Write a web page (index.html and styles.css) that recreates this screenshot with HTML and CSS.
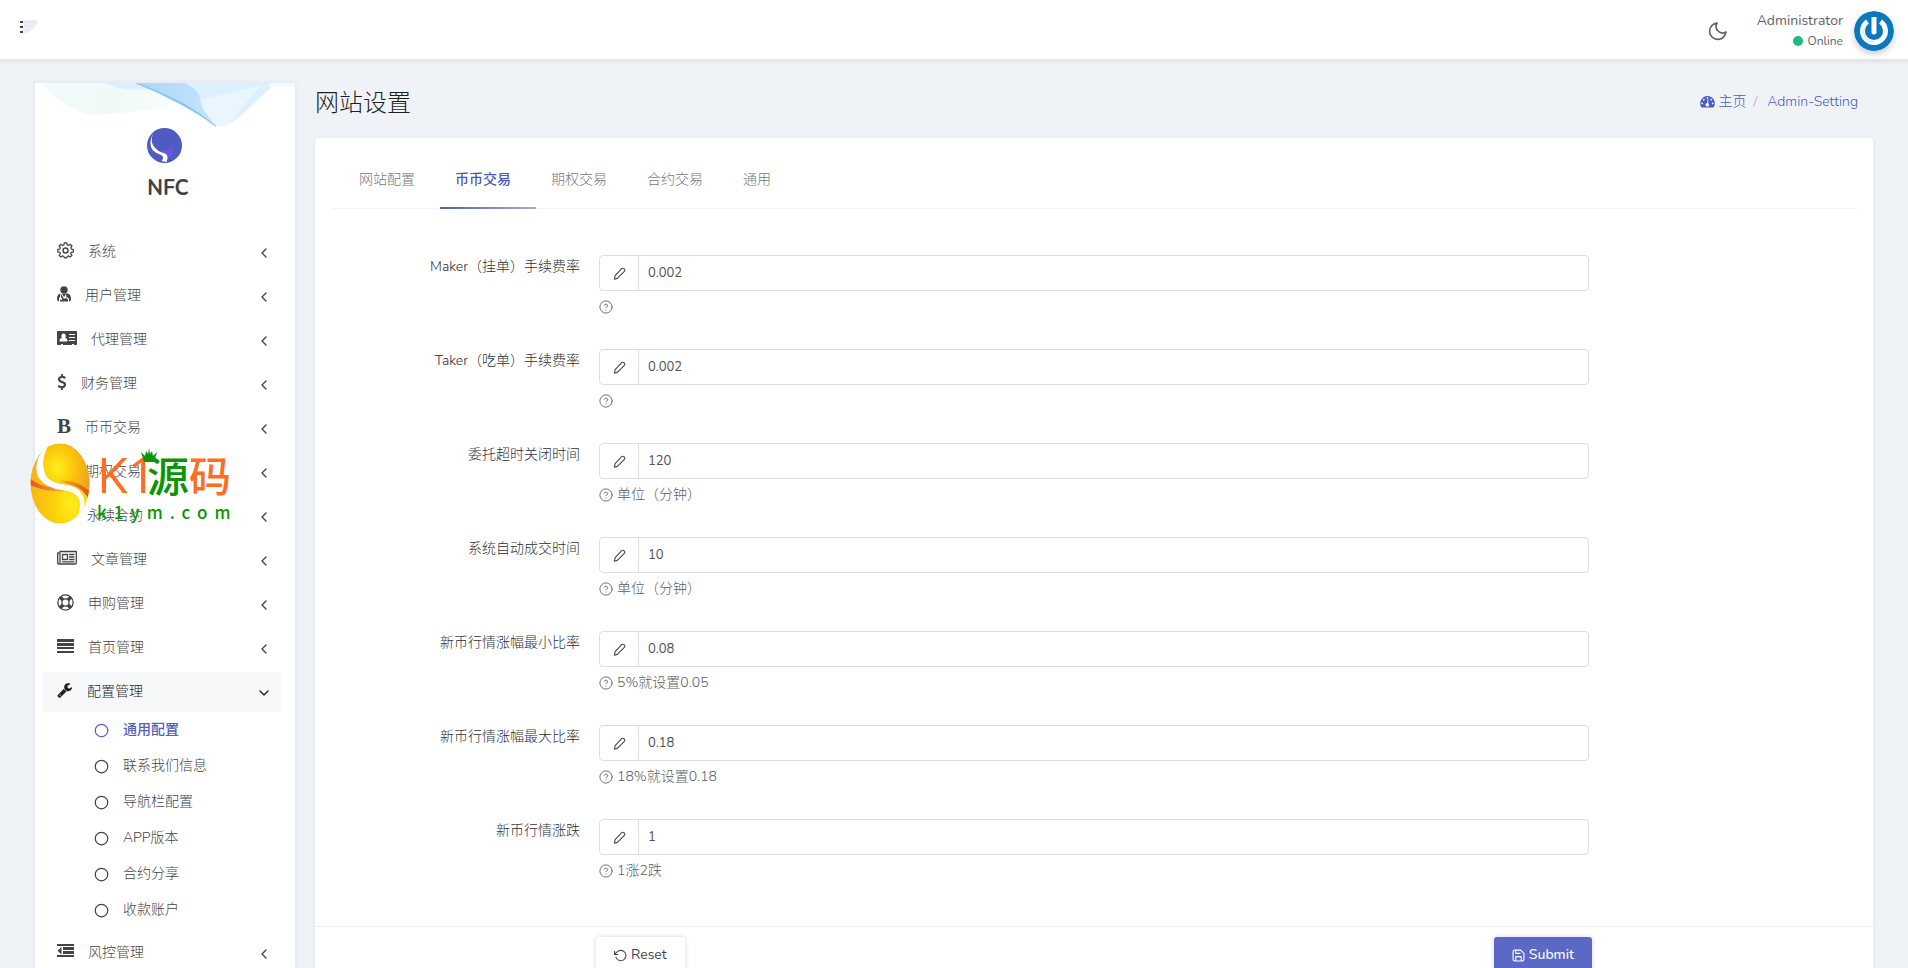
FILE: index.html
```html
<!DOCTYPE html>
<html lang="zh-CN">
<head>
<meta charset="utf-8">
<meta name="viewport" content="width=device-width, initial-scale=1">
<title>网站设置</title>
<link rel="stylesheet" href="styles.css">
</head>
<body>
<svg class="sprite" aria-hidden="true">
  <symbol id="chev" viewBox="0 0 24 24"><path d="M15 18l-6-6 6-6"/></symbol>
  <symbol id="chev-down" viewBox="0 0 24 24"><path d="M6 9l6 6 6-6"/></symbol>
  <symbol id="ring" viewBox="0 0 24 24"><circle cx="12" cy="12" r="10"/></symbol>
  <symbol id="pencil" viewBox="0 0 24 24"><path d="M16 3a2.800 2.800 0 0 1 4 0l1 1a2.800 2.800 0 0 1 0 4L8 21l-5.500 1.500L4 16z"/></symbol>
  <symbol id="help" viewBox="0 0 24 24"><circle cx="12" cy="12" r="10.500"/><path d="M9.100 9a3 3 0 0 1 5.800 1c0 2-3 3-3 3M12 17v.1"/></symbol>
</svg>

<header class="topbar">
  <button class="icon-btn" type="button" aria-label="菜单">
    <svg width="18" height="14" viewBox="0 0 18 14"><path d="M3 0h15q-2 9-11 13H3z" fill="#eceff4"/><path d="M4 2h12M4 6h9M4 10h6" stroke="#e0e4ea"/><path d="M0 1h3v2H0zM0 6h3v2H0zM0 11h3v2H0z" fill="#444"/></svg>
  </button>
  <div class="topbar-right">
    <button class="icon-btn" type="button" aria-label="夜间模式">
      <svg class="line moon" viewBox="0 0 24 24"><path d="M21.500 13A9.800 9.800 0 1 1 11 2.500 7.600 7.600 0 0 0 21.500 13z"/></svg>
    </button>
    <div class="user">
      <span class="user-name">Administrator</span>
      <span class="user-status"><i class="dot"></i>Online</span>
    </div>
    <svg class="avatar" viewBox="0 0 40 40" role="img" aria-label="avatar"><circle cx="20" cy="20" r="20" fill="#0a78bd"/><path d="M13.500 10.500A11.500 11.500 0 1 0 26.500 10.500" fill="none" stroke="#fff" stroke-width="5"/><path d="M14 12q-4 3-4.500 9 1 9 10.500 10" fill="none" stroke="#cfdfea" stroke-width="1"/><path d="M17.500 6h5v15a2.500 2.500 0 0 1-5 0z" fill="#fff"/></svg>
  </div>
</header>

<div class="shell">
  <aside class="sidebar">
    <div class="brand">
      <svg class="waves" viewBox="0 0 260 48" preserveAspectRatio="none" aria-hidden="true">
        <defs>
          <linearGradient id="w1"><stop offset="0" stop-color="#a9d6fa"/><stop offset=".6" stop-color="#c9e4fc"/><stop offset="1" stop-color="#e3f6fc"/></linearGradient>
          <linearGradient id="w2"><stop offset="0" stop-color="#f1faf9"/><stop offset=".5" stop-color="#effaf8"/><stop offset="1" stop-color="#fafeff"/></linearGradient>
        </defs>
        <path d="M6 0h105l40 20q-50 14-100 12Q30 26 6 0z" fill="url(#w2)"/>
        <path d="M70 0h55l-8 5q-25 6-47-5z" fill="#ddeffc"/>
        <path d="M101 0h141q-15 12-34 32-18 16-27 12Q150 20 101 0z" fill="url(#w1)"/>
        <path d="M150 0h92q-15 12-34 32-18 16-27 12-14-14-16-26 0-10-15-18z" fill="#dcf1fd"/>
        <path d="M166 17q30-6 60-15l-34 42q-9 4-13-2-12-14-13-25z" fill="#e9f6fe"/>
        <path d="M101 0q50 18 80 45Q150 21 101 0z" fill="#69bbf4" stroke="#8dcbf7" stroke-width="1"/>
        <path d="M235 0h25v5q-12-4-25 0z" fill="#f2fbff"/>
      </svg>
      <svg class="logo" viewBox="0 0 36 36" aria-hidden="true"><circle cx="18" cy="18" r="18" fill="#4e5bc0"/><path d="M15 23q10 0 9-5 6 5 1 12l-6 1z" fill="#6757dc"/><path d="M6 6Q1 17 6 23q4 4 9 5 3 2 0 6l5 1q3-7-2-9-7-2-10-6Q3 15 6 6z" fill="#fff"/></svg>
      <span class="brand-name">NFC</span>
    </div>
    <nav>
      <ul class="menu">
        <li><a class="item" href="#"><svg class="line w17" viewBox="0 0 24 24"><circle cx="12" cy="12" r="3.500"/><path d="M10 1.500h4l.6 3.300 2 .9 2.900-2 2.800 2.800-2 2.900.9 2 3.300.6v4l-3.300.6-.9 2 2 2.900-2.800 2.500-2.900-1.700-2 .9-.6 2.300h-4l-.6-2.300-2-.9-2.900 1.700-2.800-2.500 2-2.900-.9-2-3.300-.6v-4l3.300-.6.9-2-2-2.900 2.800-2.800 2.900 2 2-.9z" transform="translate(1.500 0) scale(.88)"/></svg>系统<svg class="line chev"><use href="#chev"/></svg></a></li>
        <li><a class="item" href="#"><svg class="solid w14" viewBox="0 0 14 16"><circle cx="7" cy="4" r="3.700"/><path d="M3.500 7.500Q0 8 0 13q0 2 2 2.500V13a1.500 1.500 0 0 1 1-1.800zM5 8l2 3 2-3 .5 3.500h1Q12 12 12 13.500v2q2-.5 2-2.500 0-5-3.500-5.500zM4 8v3.500q1.500.5 1 2.200H3v1.800h8v-2q-2-.5-1.700-1.800L7 13z"/></svg>用户管理<svg class="line chev"><use href="#chev"/></svg></a></li>
        <li><a class="item" href="#"><svg class="solid w20" viewBox="0 0 20 16"><path fill-rule="evenodd" d="M1 1h18q1 0 1 1v12q0 1-1 1h-2v-1h-2v1H6v-1H4v1H1q-1 0-1-1V2q0-1 1-1zm5.500 2.500a2.200 2.600 0 1 0 .1 0zM4.500 8Q2.500 8 2.500 11.500h8Q10.500 8 8.500 8q-2 1.500-4 0zM12 4v1h6V4zm0 3v1h6V7zm0 3v1h6v-1z"/></svg>代理管理<svg class="line chev"><use href="#chev"/></svg></a></li>
        <li><a class="item" href="#"><svg class="solid w10" viewBox="356 0 1100 1792"><path d="M1362 1185q0 153-99.500 263.500t-258.500 136.500v175q0 14-9 23t-23 9h-135q-13 0-22.500-9.500t-9.500-22.500v-175q-66-9-127.500-31t-101.500-44.500-74-48-46.500-37.500-17.500-18q-17-21-2-41l103-135q7-10 23-12 15-2 24 9l2 2q113 99 243 125 37 8 74 8 81 0 142.500-43t61.500-122q0-28-15-53t-33.500-42-58.500-37.500-66-32-80-32.500q-39-16-61.500-25t-61.500-26.500-62.500-31-56.500-35.500-53.500-42.500-43.500-49-35.500-58-21-66.500-8.500-78q0-138 98-242t255-134v-180q0-13 9.500-22.500t22.500-9.500h135q14 0 23 9t9 23v176q57 6 110.500 23t87 33.500 63.500 37.500 39 29 15 14q17 18 5 38l-81 146q-8 15-23 16-14 3-27-7-3-3-14.500-12t-39-26.500-58.500-32-74.500-26-85.500-11.500q-95 0-155 43t-60 111q0 26 8.500 48t29.500 41.500 39.500 33 56 31 60.500 27 70 27.500q53 20 81 31.500t76 35 75.500 42.500 62 50 53 63.500 31.500 76.500 13 94z"/></svg>财务管理<svg class="line chev"><use href="#chev"/></svg></a></li>
        <li><a class="item" href="#"><b class="bold-icon" aria-hidden="true">B</b>币币交易<svg class="line chev"><use href="#chev"/></svg></a></li>
        <li><a class="item" href="#"><svg class="line w14" viewBox="0 0 24 24"><use href="#ring"/></svg>期权交易<svg class="line chev"><use href="#chev"/></svg></a></li>
        <li><a class="item" href="#"><svg class="line w16" viewBox="0 0 24 24"><use href="#ring"/></svg>永续合约<svg class="line chev"><use href="#chev"/></svg></a></li>
        <li><a class="item" href="#"><svg class="line w20" viewBox="0 0 20 16"><path stroke-width="1.300" d="M3 1.500h16.300v11.300q0 1.200-1.300 1.200H2Q.7 14 .7 12.800V3H3v9.500Q3 14 2 14M5.500 4.500h5v5h-5zM12.500 4.500H17M12.500 7H17M12.500 9.500H17M5.500 11.800H17"/></svg>文章管理<svg class="line chev"><use href="#chev"/></svg></a></li>
        <li><a class="item" href="#"><svg class="line w17" viewBox="0 0 24 24"><circle cx="12" cy="12" r="10.800" stroke-width="1.800"/><circle cx="12" cy="12" r="5" stroke-width="1.800"/><path stroke-width="5" stroke-linecap="butt" d="M4.500 4.500l4 4M19.500 4.500l-4 4M4.500 19.500l4-4M19.500 19.500l-4-4"/></svg>申购管理<svg class="line chev"><use href="#chev"/></svg></a></li>
        <li><a class="item" href="#"><svg class="solid w17" viewBox="0 0 17 17"><path d="M0 1h17v3H0zM0 5h17v3H0zM0 9h17v2H0zM0 13h17v2H0z"/></svg>首页管理<svg class="line chev"><use href="#chev"/></svg></a></li>
        <li>
          <a class="item open" href="#"><svg class="solid w16" viewBox="64 0 1728 1792"><path d="M448 1472q0-26-19-45t-45-19-45 19-19 45 19 45 45 19 45-19 19-45zm644-420l-682 682q-37 37-90 37-52 0-91-37l-106-108q-38-36-38-90 0-53 38-91l681-681q39 98 114.500 173.500t173.500 114.500zm634-435q0 39-23 106-47 134-164.500 217.500t-258.500 83.500q-185 0-316.500-131.500t-131.500-316.500 131.500-316.500 316.500-131.500q58 0 121.500 16.500t107.500 46.500q16 11 16 28t-16 28l-293 169v224l193 107q5-3 79-48.500t135.500-81 70.500-35.500q15 0 23.500 10t8.500 25z"/></svg>配置管理<svg class="line chev"><use href="#chev-down"/></svg></a>
          <ul class="submenu">
            <li><a class="sub current" href="#"><svg class="line"><use href="#ring"/></svg>通用配置</a></li>
            <li><a class="sub" href="#"><svg class="line"><use href="#ring"/></svg>联系我们信息</a></li>
            <li><a class="sub" href="#"><svg class="line"><use href="#ring"/></svg>导航栏配置</a></li>
            <li><a class="sub" href="#"><svg class="line"><use href="#ring"/></svg>APP版本</a></li>
            <li><a class="sub" href="#"><svg class="line"><use href="#ring"/></svg>合约分享</a></li>
            <li><a class="sub" href="#"><svg class="line"><use href="#ring"/></svg>收款账户</a></li>
          </ul>
        </li>
        <li><a class="item" href="#"><svg class="solid w17" viewBox="0 0 17 17"><path d="M0 1h17v2H0zM6 4h11v3H6zM6 8h11v3H6zM0 12h17v2H0zM4.500 4v7.500L.5 7.700z"/></svg>风控管理<svg class="line chev"><use href="#chev"/></svg></a></li>
      </ul>
    </nav>
  </aside>

  <main class="main">
    <div class="page-head">
      <h1>网站设置</h1>
      <nav class="crumbs">
        <a href="#"><svg class="solid" viewBox="0 0 16 14"><path fill-rule="evenodd" d="M8 1a8 8 0 0 0-6.800 12q.2.500.8.500h12q.6 0 .8-.5A8 8 0 0 0 8 1zM8 2.300a1 1 0 1 1-.1 0zM4 4a1 1 0 1 1-.1 0zM12 4a1 1 0 1 1-.1 0zM2.300 8a1 1 0 1 1-.1 0zM13.700 8a1 1 0 1 1-.1 0zM9.200 5l-.7 3.600a2 2 0 1 1-1-.1L8.300 4.800z"/></svg>主页</a>
        <span class="slash">/</span>
        <a href="#">Admin-Setting</a>
      </nav>
    </div>

    <form class="card">
      <div class="tabs" role="tablist">
        <button class="tab" type="button" role="tab">网站配置</button>
        <button class="tab active" type="button" role="tab" aria-selected="true">币币交易</button>
        <button class="tab" type="button" role="tab">期权交易</button>
        <button class="tab" type="button" role="tab">合约交易</button>
        <button class="tab" type="button" role="tab">通用</button>
      </div>

      <div class="fields">
        <div class="row"><label for="f1">Maker（挂单）手续费率</label><div class="field"><div class="group"><span class="addon"><svg class="line"><use href="#pencil"/></svg></span><input id="f1" type="text" value="0.002"></div><p class="hint"><svg class="line"><use href="#help"/></svg></p></div></div>
        <div class="row"><label for="f2">Taker（吃单）手续费率</label><div class="field"><div class="group"><span class="addon"><svg class="line"><use href="#pencil"/></svg></span><input id="f2" type="text" value="0.002"></div><p class="hint"><svg class="line"><use href="#help"/></svg></p></div></div>
        <div class="row"><label for="f3">委托超时关闭时间</label><div class="field"><div class="group"><span class="addon"><svg class="line"><use href="#pencil"/></svg></span><input id="f3" type="text" value="120"></div><p class="hint"><svg class="line"><use href="#help"/></svg>单位（分钟）</p></div></div>
        <div class="row"><label for="f4">系统自动成交时间</label><div class="field"><div class="group"><span class="addon"><svg class="line"><use href="#pencil"/></svg></span><input id="f4" type="text" value="10"></div><p class="hint"><svg class="line"><use href="#help"/></svg>单位（分钟）</p></div></div>
        <div class="row"><label for="f5">新币行情涨幅最小比率</label><div class="field"><div class="group"><span class="addon"><svg class="line"><use href="#pencil"/></svg></span><input id="f5" type="text" value="0.08"></div><p class="hint"><svg class="line"><use href="#help"/></svg>5%就设置0.05</p></div></div>
        <div class="row"><label for="f6">新币行情涨幅最大比率</label><div class="field"><div class="group"><span class="addon"><svg class="line"><use href="#pencil"/></svg></span><input id="f6" type="text" value="0.18"></div><p class="hint"><svg class="line"><use href="#help"/></svg>18%就设置0.18</p></div></div>
        <div class="row"><label for="f7">新币行情涨跌</label><div class="field"><div class="group"><span class="addon"><svg class="line"><use href="#pencil"/></svg></span><input id="f7" type="text" value="1"></div><p class="hint"><svg class="line"><use href="#help"/></svg>1涨2跌</p></div></div>
      </div>

      <div class="card-foot">
        <div class="actions">
          <button class="btn" type="reset"><svg class="line" viewBox="0 0 24 24"><path d="M1 4v6h6M3.500 15a9.500 9.500 0 1 0 2.200-9.500L1 10"/></svg>Reset</button>
          <button class="btn primary" type="submit"><svg class="line" viewBox="0 0 24 24"><path d="M19 22H5a3 3 0 0 1-3-3V5a3 3 0 0 1 3-3h11l6 6v11a3 3 0 0 1-3 3zM17 22v-8H7v8M7 2v6h8"/></svg>Submit</button>
        </div>
      </div>
    </form>
  </main>
</div>

<div class="watermark">
  <svg class="wm-logo" viewBox="0 0 60 80" aria-hidden="true">
    <defs>
      <radialGradient id="g1" cx=".32" cy=".42" r=".75"><stop offset="0" stop-color="#fff01a"/><stop offset=".45" stop-color="#fbc80a"/><stop offset="1" stop-color="#ee9a20"/></radialGradient>
      <radialGradient id="g2" cx=".68" cy=".76" r=".8"><stop offset="0" stop-color="#fff01a"/><stop offset=".4" stop-color="#fbcf0a"/><stop offset="1" stop-color="#f5ae1c"/></radialGradient>
      <linearGradient id="g3"><stop offset="0" stop-color="#e4532a"/><stop offset="1" stop-color="#f8b030"/></linearGradient>
      <linearGradient id="g4"><stop offset="0" stop-color="#f8b020"/><stop offset="1" stop-color="#de4826"/></linearGradient>
      <clipPath id="egg"><ellipse cx="30" cy="40" rx="29.500" ry="40"/></clipPath>
    </defs>
    <g clip-path="url(#egg)">
      <path d="M0 0h60v80H0z" fill="url(#g2)"/>
      <path d="M17 0h43v58q-4-14-23-17-17-1-24-9Q9 16 17 0z" fill="url(#g1)"/>
      <path d="M0 35q12 10 30 9l4 4Q14 48 1 42z" fill="url(#g3)"/>
      <path d="M30 37q20 0 30 12v10Q54 43 36 40z" fill="url(#g4)"/>
      <path d="M17 2Q2 18 8 33q7 12 27 14 15 2 15 14 0 10-5 16 11-10 9-22-4-12-19-14Q18 39 15 30 10 16 19 1z" fill="#fff"/>
    </g>
  </svg>
  <div class="wm-text">
    <div class="wm-name"><span class="wm-latin">K1</span><span class="wm-green">源<svg class="crown" viewBox="0 0 16 14" aria-hidden="true"><path d="M0 4l4 4 1-5 2 3 1-6 1 6 2-3 1 5 4-4-3 10H3z"/></svg></span><span>码</span></div>
    <div class="wm-url">k1ym.com</div>
  </div>
</div>
</body>
</html>
```

FILE: styles.css
```css
* { box-sizing: border-box; }

body {
  margin: 0;
  height: 100vh;
  display: flex;
  flex-direction: column;
  overflow: hidden;
  background: #eff3f8;
  color: #414750;
  font: 300 14px/20px Nunito, Lato, "Noto Sans CJK SC", sans-serif;
}

a { color: inherit; text-decoration: none; }
ul { list-style: none; margin: 0; padding: 0; }
button, input { font: inherit; color: inherit; }
.sprite { display: none; }
.line { fill: none; stroke: currentColor; stroke-width: 2; stroke-linecap: round; stroke-linejoin: round; }
.solid { fill: currentColor; stroke: none; }
.icon-btn { padding: 0; border: 0; background: none; cursor: pointer; }

/* top bar */
.topbar {
  flex: none;
  display: flex;
  justify-content: space-between;
  align-items: center;
  height: 60px;
  padding: 2px 14px 0 20px;
  background: #fff;
  border-bottom: 1px solid #e3e7ec;
  box-shadow: 0 2px 4px rgba(0, 0, 0, .07);
  z-index: 1;
}
.topbar > .icon-btn { display: flex; padding-bottom: 7px; }
.topbar-right { display: flex; align-items: center; color: #626262; }
.moon { display: block; width: 20px; height: 20px; margin-right: 29px; }
.user { display: flex; flex-direction: column; align-items: flex-end; margin-right: 11px; font-weight: 400; }
.user-status { display: flex; align-items: center; gap: 4px; font-size: 12px; }
.dot { width: 10px; height: 10px; border-radius: 50%; background: #21b978; }
.avatar { width: 40px; height: 40px; border-radius: 50%; box-shadow: 0 3px 6px rgba(0, 0, 0, .2); }

.shell { flex: 1; min-height: 0; display: flex; padding: 0 35px; gap: 20px; }

/* sidebar */
.sidebar {
  flex: 0 0 260px;
  margin-top: 23px;
  background: #fff;
  box-shadow: 0 0 6px rgba(30, 50, 90, .08);
  overflow: hidden;
  color: #444;
}
.brand {
  display: grid;
  grid-template-rows: 45px 35px 15px 20px;
  justify-items: center;
  height: 149px;
}
.waves { width: 100%; height: 46px; }
.logo { width: 35px; height: 35px; margin-right: 2px; }
.brand-name { grid-row: 4; font-size: 21px; font-weight: 700; margin-left: 6px; color: #3c424b; }
.menu { padding: 0 14px 0 8px; }
.item {
  display: flex;
  align-items: center;
  gap: 14px;
  height: 40px;
  margin-bottom: 4px;
  padding: 0 9px 0 14px;
  border-radius: 3px;
}
.item > :first-child { flex: none; height: 16px; margin-bottom: 4px; }
.item > .w17 { width: 17px; height: 17px; }
.w10 { width: 10px; }
.w14 { width: 14px; }
.w16 { width: 16px; }
.w20 { width: 20px; }
.bold-icon { width: 14px; font: 700 21px/16px "Liberation Serif", serif; }
.item .chev { width: 16px; height: 16px; margin: 1px 0 0 auto; }
.open { margin-bottom: 0; background: #f7f8fa; color: #1f1f1f; }
.submenu { padding-bottom: 5px; }
.sub { display: flex; align-items: center; gap: 14px; height: 36px; padding-left: 51px; }
.sub svg { width: 15px; height: 15px; }
.current { color: #5360bd; font-weight: 500; }

/* main column */
.main { flex: 1; min-width: 0; display: flex; flex-direction: column; }
.page-head {
  flex: none;
  display: flex;
  justify-content: space-between;
  align-items: center;
  height: 78px;
  padding: 8px 15px 0 0;
}
h1 { margin: 0; font-size: 24px; line-height: 32px; font-weight: 300; color: #1f1f1f; }
.crumbs { display: flex; padding-bottom: 3px; color: #4c5ac0; }
.crumbs a { display: flex; align-items: center; gap: 3px; }
.crumbs svg { width: 15px; height: 13px; }
.slash { margin: 0 10px 0 7px; color: #a9b0bd; }

.card {
  flex: none;
  background: #fff;
  border-radius: 4px;
  box-shadow: 0 1px 5px rgba(30, 50, 90, .08);
}
.tabs { display: flex; margin: 0 15px 0 17px; padding: 14px 0 0 12px; border-bottom: 1px solid #f2f4f5; }
.tab {
  height: 57px;
  margin-bottom: -1px;
  padding: 0 25px 0 15px;
  border: 0;
  border-bottom: 2px solid transparent;
  background: none;
  color: #777;
  text-align: left;
}
.active {
  color: #4c58bd;
  font-weight: 500;
  border-image: linear-gradient(90deg, #4c60b3, #b3a8dc) 1;
}

.fields { padding: 46px 14px 13px; }
.row { display: grid; grid-template-columns: 2fr 8fr 2fr; height: 94px; }
.row label { padding: 2px 4px 0 0; text-align: right; color: #2c3138; }
.field { padding: 0 15px; }
.group { display: flex; height: 36px; border: 1px solid #dbdfe3; border-radius: 4px; }
.addon { display: flex; align-items: center; justify-content: center; width: 39px; border-right: 1px solid #dbdfe3; }
.addon svg { width: 13px; height: 13px; }
.group input { flex: 1; min-width: 0; padding: 0 9px; border: 0; background: none; outline: none; color: #4e5359; font-size: 13px; font-weight: 400; }
.hint { display: flex; align-items: center; gap: 4px; height: 20px; margin: 6px 0 0; color: #5a5f66; }
.hint svg { width: 14px; height: 14px; stroke-width: 1.5; margin-bottom: 1px; }

.card-foot { padding: 10px 14px; border-top: 1px solid #eef0f2; }
.actions { display: flex; justify-content: space-between; margin: 0 16.666%; padding: 0 12px; }
.btn {
  display: flex;
  align-items: center;
  gap: 4px;
  height: 36px;
  padding: 0 18px;
  border: 0;
  border-radius: 3px;
  background: #fff;
  box-shadow: 0 0 5px rgba(0, 0, 0, .16);
  font-weight: 400;
}
.btn svg { width: 13px; height: 13px; }
.primary { background: #5b69c5; color: #fff; font-weight: 500; }

/* site stamp floating over the sidebar */
.watermark { position: absolute; left: 30px; top: 443px; z-index: 2; display: flex; gap: 7px; pointer-events: none; }
.wm-logo { width: 60px; height: 81px; }
.wm-text { padding-top: 2px; }
.wm-name { display: flex; align-items: center; height: 57px; color: #ff6d1f; font: 500 42px/52px "Noto Sans CJK SC", sans-serif; }
.wm-latin { width: 50px; font: 400 50px/52px "Open Sans", sans-serif; }
.wm-green { position: relative; color: #0a9600; }
.crown { position: absolute; left: -6px; top: -1px; width: 16px; height: 16px; fill: #0a9600; }
.wm-url { color: #0a9600; font: 500 17px/20px "Noto Sans CJK SC", sans-serif; letter-spacing: 7px; }
```
